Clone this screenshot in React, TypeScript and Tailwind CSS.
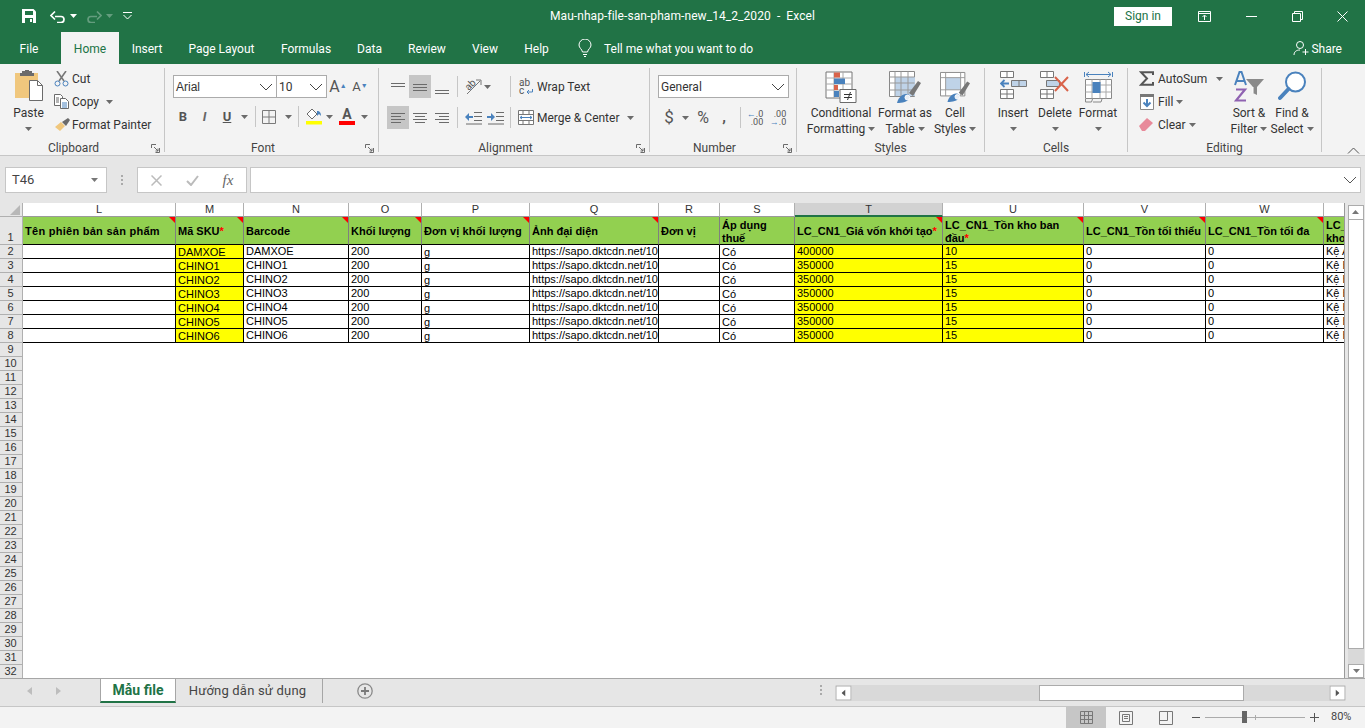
import type { ReactNode } from "react";

const GRAY = "#6b6b6b";
const BLUE = "#4a82bd";
const RED = "#d9634a";

const columns = ["L", "M", "N", "O", "P", "Q", "R", "S", "T", "U", "V", "W", ""];
const skus = ["DAMXOE", "CHINO1", "CHINO2", "CHINO3", "CHINO4", "CHINO5", "CHINO6"];
const rowNumbers = Array.from({ length: 32 }, (_, i) => i + 1);

function Caret({ color = "#6b6b6b" }: { color?: string }) {
  return (
    <svg width="7" height="4" viewBox="0 0 7 4" className="shrink-0">
      <path d="M0 0h7L3.5 4z" fill={color} />
    </svg>
  );
}

function Chevron({ color = "#444" }: { color?: string }) {
  return (
    <svg width="14" height="8" viewBox="0 0 14 8" className="shrink-0">
      <path d="M1 1l6 6 6-6" fill="none" stroke={color} strokeWidth="1" />
    </svg>
  );
}

function Launcher() {
  return (
    <div className="w-[17px] flex justify-center">
      <svg width="9" height="9" viewBox="0 0 9 9">
        <path d="M8.5 4V8.500H4.500M.5 4V.5H5M3 3l4 4M7 4.500V7H4.500" fill="none" stroke="#6b6b6b" />
      </svg>
    </div>
  );
}

function Group({ className, label, launcher, children }: { className: string; label: string; launcher?: boolean; children: ReactNode }) {
  return (
    <div className="flex h-full shrink-0">
      <div className={`flex flex-col h-full ${className}`}>
        <div className="h-[75px] flex">{children}</div>
        <div className="h-[16px] pt-[2px] flex items-center text-[#444]">
          <div className="flex-1 text-center leading-none">{label}</div>
          {launcher && <Launcher />}
        </div>
      </div>
      <div className="w-px h-[84px] mt-[4px] bg-[#c6c6c6]" />
    </div>
  );
}

function Slot({ className, active, children }: { className: string; active?: boolean; children?: ReactNode }) {
  return (
    <div className={`h-full shrink-0 flex items-center justify-center ${className} ${active ? "bg-[#c6c6c6]" : ""}`}>
      {children}
    </div>
  );
}

function VSep({ className = "" }: { className?: string }) {
  return <div className={`w-px h-[21px] bg-[#c6c6c6] shrink-0 ${className}`} />;
}

function BigButton({ className, icon, line1, line2 }: { className: string; icon: ReactNode; line1: string; line2?: string }) {
  return (
    <div className={`flex flex-col items-center shrink-0 ${className}`}>
      <div className="h-[41px] pt-[7px] flex items-start justify-center">{icon}</div>
      <div className="h-[16px] leading-[16px] whitespace-nowrap">{line1}</div>
      <div className="h-[16px] leading-[16px] whitespace-nowrap flex items-center gap-[3px]">
        {line2}
        <Caret />
      </div>
    </div>
  );
}

function Lines({ rows, w = 16 }: { rows: [number, number, number][]; w?: number }) {
  return (
    <svg width={w} height="16" viewBox={`0 0 ${w} 16`}>
      {rows.map(([x1, x2, y], i) => (
        <path key={i} d={`M${x1} ${y + 0.5}H${x2}`} stroke="#6b6b6b" />
      ))}
    </svg>
  );
}

function PasteIcon() {
  return (
    <svg width="30" height="32" viewBox="0 0 30 32">
      <path d="M1 3h23v25H1z" fill="#f0c77d" />
      <path d="M8 1h3V0h4v1h3v2h2v3H6V3h2z" fill="#6b6b6b" />
      <path d="M15.500 10.500h8l5 5v15h-13z" fill="#fff" stroke="#6b6b6b" />
      <path d="M23.500 10.500v5h5" fill="none" stroke="#6b6b6b" />
    </svg>
  );
}

function CutIcon() {
  return (
    <svg width="15" height="16" viewBox="0 0 15 16">
      <path d="M3 0l7 10M12 0L5 10" stroke="#777" strokeWidth="1.600" />
      <circle cx="3.500" cy="12.500" r="2.500" fill="none" stroke={BLUE} />
      <circle cx="11.500" cy="12.500" r="2.500" fill="none" stroke={BLUE} />
    </svg>
  );
}

function CopyIcon() {
  return (
    <svg width="15" height="15" viewBox="0 0 15 15">
      <path d="M.5.500h6l2 2v9h-8z" fill="#fff" stroke="#6b6b6b" />
      <path d="M6.500 4.500h5l3 3v7h-8z" fill="#fff" stroke="#6b6b6b" />
      <path d="M8 9h5M8 11h5M8 13h5" stroke={BLUE} />
      <path d="M2 4h3M2 6h3M2 8h3" stroke={GRAY} />
    </svg>
  );
}

function PainterIcon() {
  return (
    <svg width="17" height="15" viewBox="0 0 17 15">
      <path d="M1 10l6-5 4 4-5 5z" fill="#f0c77d" />
      <path d="M8 5l6-4 2 2-4 6z" fill="#6b6b6b" />
    </svg>
  );
}

function BordersIcon() {
  return (
    <svg width="14" height="14" viewBox="0 0 14 14">
      <path d="M.5.500h13v13H.5zM7 .5v13M.5 7h13" fill="none" stroke="#7a7a7a" />
    </svg>
  );
}

function FillIcon() {
  return (
    <svg width="18" height="17" viewBox="0 0 18 17">
      <path d="M7 1l5 5-5 5-5-5z" fill="#fff" stroke="#6b6b6b" />
      <path d="M12 3c3 0 4 2 4 5l-2-2-2 2z" fill={BLUE} />
      <path d="M1 13h16v3.500H1z" fill="#ffff00" />
    </svg>
  );
}

function ConditionalIcon() {
  return (
    <svg width="32" height="32" viewBox="0 0 32 32">
      <path d="M1 1h26v26H1z" fill="#fff" stroke="#777" />
      <path d="M9 1v26M18 1v26M1 7h26M1 13h26M1 19h26" stroke="#aaa" />
      <path d="M9 1.500h6v5H9zM9 14h4v5H9z" fill={RED} />
      <path d="M9 7.500h11v5.500H9zM9 20h5v6H9z" fill={BLUE} />
      <path d="M15 18.500h16v13H15z" fill="#fff" stroke="#6b6b6b" />
      <path d="M19 23.500h8M19 26.500h8M25.500 21l-3 8" stroke="#333" fill="none" />
    </svg>
  );
}

function BrushMark() {
  return (
    <>
      <path d="M20 22l9-12 3 2-8 13z" fill="#777" />
      <path d="M8 32c1-5 5-9 9-9 3 0 5 2 4 4-2 4-8 5-13 5z" fill={BLUE} />
      <circle cx="18.500" cy="26.500" r="2.500" fill="#e8eef5" stroke="#fff" />
    </>
  );
}

function TableIcon() {
  return (
    <svg width="32" height="32" viewBox="0 0 32 32">
      <path d="M.5.500h25v25H.5z" fill="#fff" stroke="#888" />
      <path d="M6 6h20v19H6z" fill="#bfd3e8" />
      <path d="M6 .5v25M12 .5v25M19 .5v25M.5 6h25M.5 12h25M.5 19h25" stroke="#999" fill="none" />
      <BrushMark />
    </svg>
  );
}

function CellStylesIcon() {
  return (
    <svg width="30" height="32" viewBox="0 0 32 32">
      <path d="M.5.500h26v25H.5z" fill="#fff" stroke="#888" />
      <path d="M6 6h16v13H6z" fill="#bfd3e8" />
      <path d="M6 .5v25M22 .5v25M.5 6h26M.5 19h26" stroke="#999" fill="none" />
      <BrushMark />
    </svg>
  );
}

function InsertIcon() {
  return (
    <svg width="27" height="28" viewBox="0 0 27 28">
      <path d="M.5.500h13v6H.5zM7 .5v6M.5 18.500h13v9H.5zM7 18.500v9M.5 23h13" fill="#fff" stroke="#777" />
      <path d="M11.500 9.500h15v6h-15zM19 9.500v6" fill="#bfd3e8" stroke="#777" />
      <path d="M1 12.500h8M4.500 9l-3.500 3.500 3.500 3.500" fill="none" stroke={BLUE} strokeWidth="1.800" />
    </svg>
  );
}

function DeleteIcon() {
  return (
    <svg width="30" height="28" viewBox="0 0 30 28">
      <path d="M.5.500h13v6H.5zM7 .5v6M.5 18.500h13v9H.5zM7 18.500v9M.5 23h13" fill="#fff" stroke="#777" />
      <path d="M6.500 9.500h13v6h-13z" fill="#bfd3e8" stroke="#777" />
      <path d="M15 6l13 14M28 6L15 20" stroke={RED} strokeWidth="2" />
    </svg>
  );
}

function FormatIcon() {
  return (
    <svg width="29" height="32" viewBox="0 0 29 32">
      <path d="M.5 1v5M28.500 1v5M2 3.500h25M5 1L2 3.500 5 6M24 1l3 2.500L24 6" fill="none" stroke={BLUE} />
      <path d="M1.500 8.500h26v19h-26z" fill="#fff" stroke="#888" />
      <path d="M8 8.500v19M16 8.500v19M22 8.500v19M1.500 14h26M1.500 21h26" stroke="#aaa" />
      <path d="M8.500 11h8v11h-8z" fill={BLUE} />
      <path d="M1.500 28v3h6l1-3M9 31h8l1-3" fill="none" stroke="#888" />
    </svg>
  );
}

function SortIcon() {
  return (
    <svg width="31" height="32" viewBox="0 0 31 32">
      <path d="M1 14L5.500 1h2L12 14M3 10h7" fill="none" stroke={BLUE} strokeWidth="2" />
      <path d="M2 18.500h9L2 29.500h10" fill="none" stroke="#8f62b1" strokeWidth="2.200" />
      <path d="M12 8h18l-7 8v8l-4-2v-6z" fill="#8a8a8a" />
      <path d="M19 16v6" stroke="#fff" />
    </svg>
  );
}

function FindIcon() {
  return (
    <svg width="29" height="32" viewBox="0 0 29 32">
      <circle cx="17.500" cy="11" r="9.500" fill="#fff" stroke={BLUE} strokeWidth="2" />
      <path d="M10.500 18L2 27" stroke={BLUE} strokeWidth="4" strokeLinecap="round" />
    </svg>
  );
}

function Ribbon() {
  return (
    <div className="h-[92px] shrink-0 bg-[#f3f3f3] border-b border-[#c6c6c6] flex">
      <Group className="w-[164px]" label="Clipboard" launcher>
        <div className="w-[51px] ml-[3px] flex flex-col items-center">
          <div className="h-[41px] pt-[6px]"><PasteIcon /></div>
          <div className="h-[16px] leading-[16px]">Paste</div>
          <div className="h-[16px] flex items-center"><Caret /></div>
        </div>
        <div className="flex flex-col pt-[3px] w-[108px]">
          <div className="h-[23px] flex items-center"><span className="w-[18px]"><CutIcon /></span>Cut</div>
          <div className="h-[23px] flex items-center"><span className="w-[18px]"><CopyIcon /></span>Copy<span className="ml-[7px]"><Caret /></span></div>
          <div className="h-[23px] flex items-center"><span className="w-[18px]"><PainterIcon /></span>Format Painter</div>
        </div>
      </Group>

      <Group className="w-[213px]" label="Font" launcher>
        <div className="flex flex-col pl-[8px] pt-[11px]">
          <div className="h-[23px] flex">
            <div className="w-[104px] bg-white border border-[#ababab] flex items-center justify-between pl-[2px] pr-[3px]">
              <span className="[font-family:'Liberation_Sans',sans-serif]">Arial</span>
              <Chevron />
            </div>
            <div className="w-[51px] -ml-px bg-white border border-[#ababab] flex items-center justify-between pl-[2px] pr-[3px]">
              <span>10</span>
              <Chevron />
            </div>
            <Slot className="w-[22px]"><span className="text-[16px] leading-none text-[#555]">A<sup className="text-[7px] text-[#4a82bd]">▲</sup></span></Slot>
            <Slot className="w-[22px]"><span className="text-[13px] leading-none text-[#555]">A<sup className="text-[7px] text-[#4a82bd]">▼</sup></span></Slot>
          </div>
          <div className="h-[23px] mt-[7px] flex items-center">
            <Slot className="w-[20px] font-bold text-[13px] text-[#555]">B</Slot>
            <Slot className="w-[23px] italic font-bold text-[13px] text-[#666]">I</Slot>
            <Slot className="w-[22px] underline font-bold text-[13px] text-[#555]">U</Slot>
            <Slot className="w-[12px]"><Caret /></Slot>
            <VSep className="ml-[5px]" />
            <Slot className="w-[26px]"><BordersIcon /></Slot>
            <Slot className="w-[12px]"><Caret /></Slot>
            <VSep className="ml-[4px]" />
            <Slot className="w-[25px] ml-[2px]"><FillIcon /></Slot>
            <Slot className="w-[7px]"><Caret /></Slot>
            <Slot className="w-[28px]">
              <div className="flex flex-col items-center leading-none">
                <span className="font-bold text-[14px] text-[#555] leading-[13px]">A</span>
                <span className="w-[16px] h-[4px] bg-[#ff0000]" />
              </div>
            </Slot>
            <Slot className="w-[7px]"><Caret /></Slot>
          </div>
        </div>
      </Group>

      <Group className="w-[270px]" label="Alignment" launcher>
        <div className="flex flex-col pl-[8px] pt-[11px]">
          <div className="h-[23px] flex items-center">
            <Slot className="w-[22px]"><Lines rows={[[1, 15, 4], [1, 15, 7]]} /></Slot>
            <Slot className="w-[22px]" active><Lines rows={[[1, 15, 5], [1, 15, 8], [1, 15, 11]]} /></Slot>
            <Slot className="w-[22px]"><Lines rows={[[1, 15, 11], [1, 15, 14]]} /></Slot>
            <VSep className="ml-[4px]" />
            <Slot className="w-[22px] ml-[4px] relative">
              <span className="-rotate-45 text-[10px] leading-none text-[#555] -translate-x-[2px] -translate-y-[2px]">ab</span>
              <svg width="17" height="17" viewBox="0 0 17 17" className="absolute left-[3px] top-[3px]">
                <path d="M2 16L15 3M11 2h5v5" fill="none" stroke="#777" />
              </svg>
            </Slot>
            <Slot className="w-[7px]"><Caret /></Slot>
            <VSep className="ml-[19px]" />
            <div className="flex items-center ml-[8px]">
              <div className="w-[14px] text-[10px] leading-[8px] text-[#555] relative">
                ab<br />c
                <svg width="7" height="6" viewBox="0 0 7 6" className="absolute right-0 bottom-0">
                  <path d="M6.500 0v3H1M3 1L1 3l2 2" fill="none" stroke={BLUE} />
                </svg>
              </div>
              <span className="ml-[4px]">Wrap Text</span>
            </div>
          </div>
          <div className="h-[23px] mt-[8px] flex items-center">
            <Slot className="w-[22px]" active><Lines rows={[[1, 15, 3], [1, 11, 6], [1, 15, 9], [1, 11, 12]]} /></Slot>
            <Slot className="w-[22px]"><Lines rows={[[1, 15, 3], [3, 13, 6], [1, 15, 9], [3, 13, 12]]} /></Slot>
            <Slot className="w-[22px]"><Lines rows={[[1, 15, 3], [5, 15, 6], [1, 15, 9], [5, 15, 12]]} /></Slot>
            <VSep className="ml-[4px]" />
            <Slot className="w-[22px] ml-[4px]">
              <svg width="17" height="14" viewBox="0 0 17 14">
                <path d="M9 1.500h8M9 5.500h8M9 9.500h8M1 13h16" stroke="#6b6b6b" />
                <path d="M0 6l4-4v3h4v2H4v3z" fill={BLUE} />
              </svg>
            </Slot>
            <Slot className="w-[22px]">
              <svg width="17" height="14" viewBox="0 0 17 14">
                <path d="M9 1.500h8M9 5.500h8M9 9.500h8M1 13h16" stroke="#6b6b6b" />
                <path d="M8 6L4 2v3H0v2h4v3z" fill={BLUE} />
              </svg>
            </Slot>
            <VSep className="ml-[4px]" />
            <div className="flex items-center ml-[7px]">
              <svg width="16" height="15" viewBox="0 0 16 15">
                <path d="M.5.500h15v14H.5zM.5 4.500h15M.5 10.500h15M5 .5v4M11 .5v4M5 10.500v4M11 10.500v4" fill="#fff" stroke="#777" />
                <path d="M2 7.500h12M4 6L2 7.500 4 9M12 6l2 1.500L12 9" fill="none" stroke={BLUE} />
              </svg>
              <span className="ml-[3px]">Merge &amp; Center</span>
              <span className="ml-[8px]"><Caret /></span>
            </div>
          </div>
        </div>
      </Group>

      <Group className="w-[146px]" label="Number" launcher>
        <div className="flex flex-col pl-[8px] pt-[11px]">
          <div className="h-[23px] w-[131px] bg-white border border-[#ababab] flex items-center justify-between pl-[2px] pr-[3px]">
            <span>General</span>
            <Chevron />
          </div>
          <div className="h-[23px] mt-[8px] flex items-center text-[#555]">
            <Slot className="w-[22px] text-[17px]">$</Slot>
            <Slot className="w-[10px]"><Caret /></Slot>
            <Slot className="w-[26px] text-[16px]">%</Slot>
            <Slot className="w-[16px] font-bold text-[15px]">,</Slot>
            <VSep className="ml-[8px]" />
            <Slot className="w-[28px] text-[9px] leading-[8px]">
              <div className="text-right"><span className="text-[#4a82bd]">←</span>.0<br />.00</div>
            </Slot>
            <Slot className="w-[18px] text-[9px] leading-[8px]">
              <div className="text-right">.00<br /><span className="text-[#4a82bd]">→</span>.0</div>
            </Slot>
          </div>
        </div>
      </Group>

      <Group className="w-[187px]" label="Styles">
        <BigButton className="w-[76px] ml-[6px]" icon={<ConditionalIcon />} line1="Conditional" line2="Formatting" />
        <BigButton className="w-[52px]" icon={<TableIcon />} line1="Format as" line2="Table" />
        <BigButton className="w-[48px]" icon={<CellStylesIcon />} line1="Cell" line2="Styles" />
      </Group>

      <Group className="w-[142px]" label="Cells">
        <BigButton className="w-[42px] ml-[7px]" icon={<InsertIcon />} line1="Insert" />
        <BigButton className="w-[42px]" icon={<DeleteIcon />} line1="Delete" />
        <BigButton className="w-[44px]" icon={<FormatIcon />} line1="Format" />
      </Group>

      <Group className="w-[193px]" label="Editing">
        <div className="w-[89px] ml-[9px] flex flex-col pt-[3px]">
          <div className="h-[23px] flex items-center">
            <span className="w-[21px] pl-[2px]">
              <svg width="15" height="15" viewBox="0 0 15 15">
                <path d="M14 4V1.200H2L8 7.500 2 13.800h12V11" fill="none" stroke="#555" strokeWidth="2" />
              </svg>
            </span>
            AutoSum
            <span className="ml-auto mr-[3px]"><Caret /></span>
          </div>
          <div className="h-[23px] flex items-center">
            <span className="w-[21px] pl-[3px]">
              <svg width="14" height="16" viewBox="0 0 14 16">
                <path d="M.5.500h13v15H.5z" fill="#fff" stroke="#888" />
                <path d="M0 0h14v3H0z" fill="#777" />
                <path d="M7 5v7M3.500 8.500L7 12l3.500-3.500" fill="none" stroke={BLUE} strokeWidth="2" />
              </svg>
            </span>
            Fill<span className="ml-[3px]"><Caret /></span>
          </div>
          <div className="h-[23px] flex items-center">
            <span className="w-[21px] pl-[2px]">
              <svg width="14" height="13" viewBox="0 0 14 13">
                <path d="M0 8l8-8 6 5-8 8H3z" fill="#e88a9a" />
              </svg>
            </span>
            Clear<span className="ml-[3px]"><Caret /></span>
          </div>
        </div>
        <BigButton className="w-[46px]" icon={<SortIcon />} line1="Sort &amp;" line2="Filter" />
        <BigButton className="w-[40px]" icon={<FindIcon />} line1="Find &amp;" line2="Select" />
      </Group>

      <div className="flex-1 flex items-end justify-end pr-[5px] pb-[1px]">
        <svg width="13" height="7" viewBox="0 0 13 7"><path d="M1 6.500l5.500-5.500 5.500 5.500" fill="none" stroke="#555" /></svg>
      </div>
    </div>
  );
}

function TitleBar() {
  return (
    <div className="h-[32px] shrink-0 bg-[#217346] text-white flex items-center relative">
      <div className="w-[22px] ml-[22px]">
        <svg width="14" height="14" viewBox="0 0 14 14">
          <path d="M0 0h11.500L14 2.500V14H0z" fill="#fff" />
          <path d="M3 2h8v4H3zM3 9h8v5H3z" fill="#217346" />
          <path d="M8 10h2v3H8z" fill="#fff" />
        </svg>
      </div>
      <div className="ml-[6px] flex items-center">
        <svg width="16" height="13" viewBox="0 0 16 13">
          <path d="M5 6.500h6c4 0 4 6 0 6H7M5 1.500L1 5.500l4 4" fill="none" stroke="#fff" strokeWidth="1.700" />
        </svg>
        <span className="ml-[4px]"><Caret color="#fff" /></span>
      </div>
      <div className="ml-[9px] flex items-center opacity-30">
        <svg width="16" height="13" viewBox="0 0 16 13">
          <path d="M11 6.500H5c-4 0-4 6 0 6h4M11 1.500l4 4-4 4" fill="none" stroke="#fff" strokeWidth="1.700" />
        </svg>
        <span className="ml-[4px]"><Caret color="#fff" /></span>
      </div>
      <div className="ml-[10px]">
        <svg width="9" height="8" viewBox="0 0 9 8"><path d="M0 .5h9M.5 3l4 4 4-4" fill="none" stroke="#fff" /></svg>
      </div>
      <div className="absolute left-[550px] top-[8px] leading-[16px] whitespace-nowrap tracking-[0.07px]">Mau-nhap-file-san-pham-new_14_2_2020&nbsp; -&nbsp; Excel</div>
      <div className="ml-auto flex items-center">
        <div className="w-[58px] h-[19px] bg-white text-[#217346] flex items-center justify-center mr-[24px]">Sign in</div>
        <Slot className="w-[16px] mr-[16px]">
          <svg width="13" height="11" viewBox="0 0 13 11"><path d="M.5.500h12v10H.5zM.5 2.500h12M6.500 9V4.500M4.500 6l2-2 2 2" fill="none" stroke="#fff" /></svg>
        </Slot>
        <Slot className="w-[46px]"><svg width="11" height="1" viewBox="0 0 11 1"><path d="M0 .5h11" stroke="#fff" /></svg></Slot>
        <Slot className="w-[46px]">
          <svg width="11" height="11" viewBox="0 0 11 11"><path d="M.5 2.500h8v8h-8zM2.500 2.500v-2h8v8h-2" fill="none" stroke="#fff" /></svg>
        </Slot>
        <Slot className="w-[45px]">
          <svg width="11" height="11" viewBox="0 0 11 11"><path d="M.5.500l10 10M10.500.5l-10 10" stroke="#fff" /></svg>
        </Slot>
      </div>
    </div>
  );
}

function TabsRow() {
  const tabs: [string, string][] = [
    ["Insert", "w-[56px]"],
    ["Page Layout", "w-[93px]"],
    ["Formulas", "w-[76px]"],
    ["Data", "w-[51px]"],
    ["Review", "w-[64px]"],
    ["View", "w-[52px]"],
    ["Help", "w-[51px]"],
  ];
  return (
    <div className="h-[32px] shrink-0 bg-[#217346] text-white flex items-stretch">
      <div className="w-[61px] pt-[8px] pr-[3px] text-center">File</div>
      <div className="w-[58px] bg-[#f3f3f3] text-[#217346] pt-[8px] text-center">Home</div>
      {tabs.map(([name, w]) => (
        <div key={name} className={`${w} pt-[8px] text-center`}>{name}</div>
      ))}
      <div className="ml-[16px] pt-[7px] w-[26px]">
        <svg width="14" height="18" viewBox="0 0 14 18">
          <path d="M4.500 13C4 10 1 9 1 6a6 6 0 0 1 12 0c0 3-3 4-3.500 7zM5 15.500h4M6 17.500h2" fill="none" stroke="#fff" />
        </svg>
      </div>
      <div className="pt-[8px]">Tell me what you want to do</div>
      <div className="ml-auto flex items-start pt-[8px] pr-[23px]">
        <svg width="16" height="16" viewBox="0 0 16 16" className="mr-[2px]">
          <circle cx="7" cy="5" r="3.500" fill="none" stroke="#fff" />
          <path d="M1 15c0-3 2-5 6-5M12.500 9v6M9.500 12h6" fill="none" stroke="#fff" />
        </svg>
        Share
      </div>
    </div>
  );
}

function FormulaBar() {
  return (
    <div className="h-[47px] shrink-0 bg-[#e6e6e6] flex items-start pt-[11px] pl-[5px] pr-[4px]">
      <div className="w-[102px] h-[26px] bg-white border border-[#c6c6c6] flex items-center justify-between pl-[6px] pr-[8px] text-[13px] text-[#444]">
        T46
        <Caret color="#777" />
      </div>
      <div className="w-[30px] h-[26px] flex flex-col items-center justify-center gap-[2px]">
        <span className="w-[2px] h-[2px] bg-[#aaa]" />
        <span className="w-[2px] h-[2px] bg-[#aaa]" />
        <span className="w-[2px] h-[2px] bg-[#aaa]" />
      </div>
      <div className="w-[110px] h-[26px] bg-white border border-[#c6c6c6] flex items-center">
        <Slot className="w-[36px]"><svg width="11" height="11" viewBox="0 0 11 11"><path d="M.5.500l10 10M10.500.5l-10 10" stroke="#bbb" strokeWidth="1.500" /></svg></Slot>
        <Slot className="w-[36px]"><svg width="13" height="11" viewBox="0 0 13 11"><path d="M1 6l4 4 7-9" fill="none" stroke="#bbb" strokeWidth="2" /></svg></Slot>
        <Slot className="w-[36px] [font-family:'Liberation_Serif',serif] italic text-[15px] text-[#666]">fx</Slot>
      </div>
      <div className="ml-[3px] flex-1 h-[26px] bg-white border border-[#c6c6c6] flex items-center justify-end pr-[3px]">
        <Chevron color="#555" />
      </div>
    </div>
  );
}

function ColHeader({ name }: { name: string }) {
  const active = name === "T";
  return (
    <div className={`border-r border-[#b0b0b0] flex items-center justify-center text-[#333] ${active ? "bg-[#d2d2d2] border-b-2 border-b-[#217346]" : "border-b border-b-[#9a9a9a]"}`}>
      {name}
    </div>
  );
}

function Head({ lines, mark, star, className = "" }: { lines: string[]; mark?: boolean; star?: boolean; className?: string }) {
  return (
    <div className={`relative bg-[#92d050] border-r border-[#7f7f7f] border-b border-b-black flex flex-col justify-center pl-[2px] pt-[2px] font-bold leading-[13px] overflow-hidden whitespace-nowrap ${className}`}>
      {lines.map((line, i) => (
        <div key={i}>
          {line}
          {star && i === lines.length - 1 && <span className="text-[#ff0000]">*</span>}
        </div>
      ))}
      {mark && <span className="absolute top-0 right-0 w-0 h-0 border-t-[6px] border-l-[6px] border-t-[#ff0000] border-l-transparent" />}
    </div>
  );
}

function Cell({ yellow, low, children }: { yellow?: boolean; low?: boolean; children?: ReactNode }) {
  return (
    <div className={`border-r border-b border-black pl-[2px] leading-[13px] overflow-hidden whitespace-nowrap ${yellow ? "bg-[#ffff00]" : "bg-white"} ${low ? "pt-px" : ""}`}>
      {children}
    </div>
  );
}

function RowHeader({ n }: { n: number }) {
  return (
    <div className={`col-start-1 bg-[#e6e6e6] border-r border-b border-[#b0b0b0] text-[#333] flex justify-center pr-[1px] leading-[13px] ${n === 1 ? "items-end" : "items-center"}`}>
      {n}
    </div>
  );
}

function Sheet() {
  return (
    <div className="h-[475px] shrink-0 flex bg-white overflow-hidden">
      <div className="w-[1345px] h-[475px] overflow-hidden border-r border-[#9a9a9a] grid grid-cols-[23px_153px_68px_105px_73px_108px_129px_61px_75px_148px_141px_122px_118px_21px] grid-rows-[14px_28px_repeat(31,14px)] text-[11px] [font-family:'Liberation_Sans',Arial,sans-serif] text-black">
        <div className="bg-[#e6e6e6] border-r border-b border-[#b0b0b0] flex items-end justify-end pr-[2px] pb-[1px]">
          <svg width="10" height="10" viewBox="0 0 10 10"><path d="M10 0v10H0z" fill="#b8b8b8" /></svg>
        </div>
        {columns.map((c, i) => <ColHeader key={i} name={c} />)}

        <RowHeader n={1} />
        <Head lines={["Tên phiên bản sản phẩm"]} mark className="tracking-[0.27px]" />
        <Head lines={["Mã SKU"]} mark star />
        <Head lines={["Barcode"]} mark />
        <Head lines={["Khối lượng"]} mark />
        <Head lines={["Đơn vị khối lượng"]} mark className="tracking-[0.12px]" />
        <Head lines={["Ảnh đại diện"]} mark />
        <Head lines={["Đơn vị"]} />
        <Head lines={["Áp dụng", "thuế"]} />
        <Head lines={["LC_CN1_Giá vốn khởi tạo"]} mark star />
        <Head lines={["LC_CN1_Tồn kho ban", "đầu"]} mark star />
        <Head lines={["LC_CN1_Tồn tối thiểu"]} mark />
        <Head lines={["LC_CN1_Tồn tối đa"]} mark />
        <Head lines={["LC_CN1_Vị trí", "kho"]} />

        {skus.map((sku, i) => (
          <div key={sku} className="contents">
            <RowHeader n={i + 2} />
            <Cell />
            <Cell yellow low>{sku}</Cell>
            <Cell>{sku}</Cell>
            <Cell>200</Cell>
            <Cell low>g</Cell>
            <Cell>https://sapo.dktcdn.net/100/</Cell>
            <Cell />
            <Cell low>Có</Cell>
            <Cell yellow>{i === 0 ? "400000" : "350000"}</Cell>
            <Cell yellow>{i === 0 ? "10" : "15"}</Cell>
            <Cell>0</Cell>
            <Cell>0</Cell>
            <Cell>{i === 0 ? "Kệ A" : "Kệ B"}</Cell>
          </div>
        ))}

        {rowNumbers.slice(8).map((n) => <RowHeader key={n} n={n} />)}
      </div>
      <div className="w-[20px] bg-[#e6e6e6] pl-[3px] pt-[2px] flex flex-col">
        <div className="w-[16px] h-[15px] bg-white border border-[#ababab] flex items-center justify-center rotate-180"><Caret color="#777" /></div>
        <div className="w-[16px] h-[429px] bg-white border border-[#ababab] border-t-0" />
        <div className="w-[16px] h-[15px] bg-[#d9d9d9]" />
        <div className="w-[16px] h-[14px] bg-white border border-[#ababab] flex items-center justify-center"><Caret color="#777" /></div>
      </div>
    </div>
  );
}

function SheetTabs() {
  return (
    <div className="h-[29px] shrink-0 bg-[#e6e6e6] border-t border-b border-t-[#a6a6a6] border-b-[#c6c6c6] flex items-start">
      <div className="w-[100px] h-[24px] flex items-center">
        <svg width="5" height="8" viewBox="0 0 5 8" className="ml-[27px]"><path d="M5 0v8L0 4z" fill="#bdbdbd" /></svg>
        <svg width="5" height="8" viewBox="0 0 5 8" className="ml-[24px]"><path d="M0 0v8l5-4z" fill="#bdbdbd" /></svg>
      </div>
      <div className="w-[76px] h-[25px] -mt-px bg-white border-l border-r border-t border-[#a6a6a6] border-b-2 border-b-[#217346] text-[#217346] font-bold text-[14px] flex items-center justify-center">
        Mẫu file
      </div>
      <div className="w-[147px] h-[24px] flex items-center justify-center border-r border-[#a6a6a6] text-[#444] text-[13px] tracking-[0.2px] whitespace-nowrap pr-[3px]">
        Hướng dẫn sử dụng
      </div>
      <div className="ml-[34px] h-[24px] flex items-center">
        <svg width="16" height="16" viewBox="0 0 16 16">
          <circle cx="8" cy="8" r="7.200" fill="none" stroke="#8a8a8a" strokeWidth="1.300" />
          <path d="M8 4v8M4 8h8" stroke="#7a7a7a" strokeWidth="1.800" />
        </svg>
      </div>
      <div className="ml-auto flex items-start mt-[6px] mr-[20px]">
        <div className="mr-[14px] flex flex-col gap-[2px]">
          <span className="w-[2px] h-[2px] bg-[#aaa]" />
          <span className="w-[2px] h-[2px] bg-[#aaa]" />
          <span className="w-[2px] h-[2px] bg-[#aaa]" />
        </div>
        <div className="w-[509px] h-[16px] bg-[#d9d9d9] flex">
          <div className="w-[15px] h-full bg-white border border-[#ababab] flex items-center justify-center rotate-90"><Caret color="#555" /></div>
          <div className="w-[205px] h-full ml-[188px] bg-white border border-[#ababab]" />
          <div className="ml-auto w-[15px] h-full bg-white border border-[#ababab] flex items-center justify-center -rotate-90"><Caret color="#555" /></div>
        </div>
      </div>
    </div>
  );
}

function StatusBar() {
  return (
    <div className="h-[21px] shrink-0 bg-[#f3f3f3] flex items-center justify-end text-[#444]">
      <Slot className="w-[40px] bg-[#c6c6c6]">
        <svg width="13" height="13" viewBox="0 0 13 13"><path d="M.5.500h12v12H.5zM4.500.5v12M8.500.5v12M.5 4.500h12M.5 8.500h12" fill="none" stroke="#777" /></svg>
      </Slot>
      <Slot className="w-[40px]">
        <svg width="14" height="14" viewBox="0 0 14 14"><path d="M.5.500h13v13H.5zM3.500 3.500h7v7h-7zM5 5.500h4M5 7.500h4" fill="none" stroke="#777" /></svg>
      </Slot>
      <Slot className="w-[40px]">
        <svg width="14" height="14" viewBox="0 0 14 14"><path d="M.5.500h13v13H.5zM.5 9.500h8V.5" fill="none" stroke="#777" /></svg>
      </Slot>
      <div className="ml-[6px] w-[8px] h-px bg-[#555]" />
      <div className="relative ml-[5px] w-[100px] h-px bg-[#ababab]">
        <span className="absolute left-[50px] -top-[2px] w-px h-[5px] bg-[#ababab]" />
        <span className="absolute left-[37px] -top-[6px] w-[5px] h-[12px] bg-[#666]" />
      </div>
      <svg width="9" height="9" viewBox="0 0 9 9" className="ml-[5px]"><path d="M0 4.500h9M4.500 0v9" stroke="#555" /></svg>
      <span className="ml-[12px] w-[34px] text-[11px]">80%</span>
    </div>
  );
}

export default function App() {
  return (
    <div className="w-[1365px] h-[728px] overflow-hidden flex flex-col bg-white text-[12px] text-[#333] [font-family:Roboto,sans-serif]">
      <TitleBar />
      <TabsRow />
      <Ribbon />
      <FormulaBar />
      <Sheet />
      <SheetTabs />
      <StatusBar />
    </div>
  );
}
